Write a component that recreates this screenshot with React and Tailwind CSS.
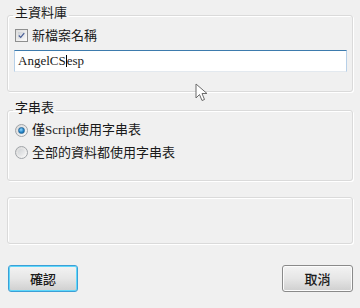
import React from "react";

const FONT = { fontFamily: '"Liberation Serif", "Noto Sans CJK TC", serif' };
const CJK = { fontFamily: '"Noto Sans CJK TC", "Liberation Sans", sans-serif' };

function Checkbox() {
  return (
    <div className="w-[13px] h-[13px] border border-[#8e8f8f] bg-gradient-to-br from-[#dcdcdc] to-[#fbfbfb] p-[2px]">
      <div className="w-full h-full bg-gradient-to-br from-[#cbcfd5] to-[#f6f6f6] flex items-center justify-center">
        <svg width="9" height="9" viewBox="0 0 9 9">
          <path d="M1 4.5 L3.5 7 L8 1.5" fill="none" stroke="#4a5f97" strokeWidth="1.6" />
        </svg>
      </div>
    </div>
  );
}

function Radio({ checked }) {
  return (
    <div className="w-[13px] h-[13px] rounded-full border border-[#a0a4a8] bg-gradient-to-br from-[#d8d8d8] to-[#fafafa] flex items-center justify-center">
      {checked ? (
        <div className="w-[7px] h-[7px] rounded-full bg-[radial-gradient(circle_at_40%_35%,#8fd6ff,#1e7fc4_60%,#145a8d)] border border-[#2b6a9a]" />
      ) : (
        <div className="w-[7px] h-[7px] rounded-full bg-gradient-to-br from-[#d0d3d6] to-[#f2f2f2]" />
      )}
    </div>
  );
}

export default function App() {
  return (
    <div className="relative w-[360px] h-[308px] bg-[#f0f0f0] overflow-hidden text-[13px] text-[#1a1a1a] flex flex-col" style={FONT}>
      {/* Group 1 */}
      <fieldset className="ml-[7px] mt-[4px] w-[346px] border border-[#dadada] rounded-[3px] shadow-[inset_1px_1px_0_#ffffff,1px_1px_0_#ffffff] pb-[19px]">
        <legend className="ml-[5px] px-[2px] h-[22px] leading-[16px]" style={CJK}>主資料庫</legend>
        <div className="mt-[2px] ml-[7px] flex items-center gap-[4px] h-[14px]">
          <Checkbox />
          <span className="leading-[16px]" style={CJK}>新檔案名稱</span>
        </div>
        <div className="mt-[8px] ml-[6px] w-[333px] h-[22px] bg-white border border-[#b7d0e8] border-t-[#3d7bad] border-b-[#e3e9ef] flex items-center pl-[3px] leading-[16px]">
          <span>AngelCS</span>
          <span className="inline-block w-[1px] h-[12px] bg-black" />
          <span>esp</span>
        </div>
      </fieldset>

      {/* Group 2 */}
      <fieldset className="ml-[7px] mt-[7px] w-[346px] border border-[#dadada] rounded-[3px] shadow-[inset_1px_1px_0_#ffffff,1px_1px_0_#ffffff] pb-[20px]">
        <legend className="ml-[5px] px-[2px] h-[22px] leading-[16px]" style={CJK}>字串表</legend>
        <div className="mt-[1px] ml-[7px] flex items-center gap-[4px] h-[16px]">
          <Radio checked />
          <span className="leading-[16px]">僅Script使用字串表</span>
        </div>
        <div className="mt-[6px] ml-[7px] flex items-center gap-[4px] h-[16px]">
          <Radio />
          <span className="leading-[16px]" style={CJK}>全部的資料都使用字串表</span>
        </div>
      </fieldset>

      {/* Group 3 */}
      <div className="ml-[7px] mt-[16px] w-[346px] h-[47px] border border-[#dadada] rounded-[3px] shadow-[inset_1px_1px_0_#ffffff,1px_1px_0_#ffffff]" />

      {/* Buttons */}
      <div className="mt-[21px] px-[8px] flex justify-between">
        <button className="w-[70px] h-[27px] rounded-[3px] border border-[#3c9fd6] shadow-[inset_0_0_0_1px_#5fd8fb] bg-gradient-to-b from-[#f3f3f3] via-[#e6e6e6] to-[#cfcfcf] flex items-center justify-center font-medium" style={CJK}>
          確認
        </button>
        <button className="w-[71px] h-[27px] mr-[-1px] rounded-[3px] border border-[#8a8a8a] shadow-[inset_0_0_0_1px_#fcfcfc] bg-gradient-to-b from-[#f3f3f3] via-[#e6e6e6] to-[#cfcfcf] flex items-center justify-center font-medium" style={CJK}>
          取消
        </button>
      </div>

      {/* Mouse cursor */}
      <svg className="absolute left-[195px] top-[83px]" width="14" height="20" viewBox="0 0 14 20">
        <path d="M1 1 L1 15 L4.5 11.5 L7 17.5 L9.5 16.5 L7 10.5 L12 10.5 Z" fill="#ffffff" stroke="#6b6b6b" strokeWidth="1" strokeLinejoin="round" />
      </svg>
    </div>
  );
}
